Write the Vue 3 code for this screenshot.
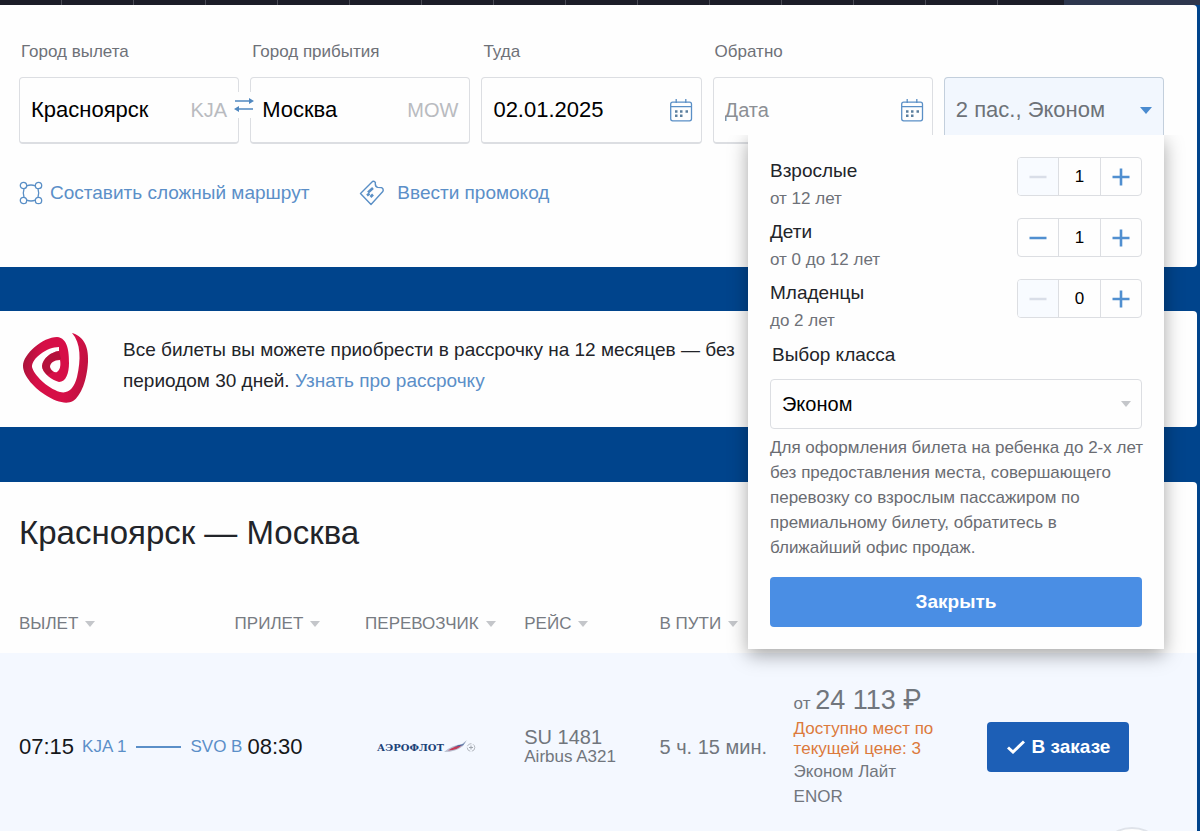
<template>
  <div class="page">
    <div class="topbar"></div>

    <section class="panel search">
      <div class="fields">
        <div class="field">
          <label for="from">Город вылета</label>
          <div class="box">
            <input id="from" v-model="from" type="text" />
            <span class="code">KJA</span>
          </div>
          <button class="swap" type="button" aria-label="Поменять города" @click="swapCities">
            <svg width="20" height="14" viewBox="0 0 20 14">
              <path d="M1 3h15M19 11H4" stroke="#5088c0" stroke-width="1.4" fill="none" />
              <path d="M15 0l5 3-5 3zM5 8l-5 3 5 3z" fill="#5088c0" />
            </svg>
          </button>
        </div>
        <div class="field">
          <label for="to">Город прибытия</label>
          <div class="box">
            <input id="to" v-model="to" type="text" />
            <span class="code">MOW</span>
          </div>
        </div>
        <div v-for="d in dates" :key="d.id" class="field">
          <label :for="d.id">{{ d.label }}</label>
          <div class="box">
            <input :id="d.id" v-model="d.value" type="text" placeholder="Дата" />
            <svg class="calendar" width="24" height="24" viewBox="0 0 24 24">
              <rect x="1.7" y="4.2" width="20.8" height="18.6" rx="2" fill="none" stroke="#5a8fc6" stroke-width="1.3" />
              <path d="M2 8.6h20.500M7.200 1v4M16.800 1v4" stroke="#5a8fc6" stroke-width="1.3" />
              <path d="M6 13.500h2.500M11 13.500h2.500M16.500 13.500h2.500M6 17.800h2.500M11 17.800h2.500" stroke="#5b7f9e" stroke-width="2.500" />
            </svg>
          </div>
        </div>
        <div class="field">
          <button class="pax" type="button" @click="open = !open">
            <span>2 пас., Эконом</span>
            <i class="caret caret-blue"></i>
          </button>
          <div v-if="open" class="popup">
            <div v-for="p in passengers" :key="p.title" class="row">
              <div>
                <div class="row-title">{{ p.title }}</div>
                <div class="row-note">{{ p.note }}</div>
              </div>
              <div class="counter">
                <button type="button" :disabled="p.count <= p.min" aria-label="Меньше" @click="p.count--">
                  <svg width="18" height="18" viewBox="0 0 18 18"><path d="M0.500 9h17" stroke="currentColor" stroke-width="2.600" /></svg>
                </button>
                <span>{{ p.count }}</span>
                <button type="button" aria-label="Больше" @click="p.count++">
                  <svg width="18" height="18" viewBox="0 0 18 18"><path d="M0.500 9h17M9 0.500v17" stroke="currentColor" stroke-width="2.600" /></svg>
                </button>
              </div>
            </div>
            <label class="class-label" for="cabin">Выбор класса</label>
            <div class="select-wrap">
              <select id="cabin" v-model="cabin">
                <option>Эконом</option>
                <option>Комфорт</option>
                <option>Бизнес</option>
              </select>
              <i class="caret"></i>
            </div>
            <p class="hint">
              Для оформления билета на ребенка до 2-х лет<br />
              без предоставления места, совершающего<br />
              перевозку со взрослым пассажиром по<br />
              премиальному билету, обратитесь в<br />
              ближайший офис продаж.
            </p>
            <button class="close" type="button" @click="open = false">Закрыть</button>
          </div>
        </div>
      </div>

      <div class="links">
        <a href="#">
          <svg width="24" height="24" viewBox="0 0 24 24" fill="none" stroke="#5a8fc6" stroke-width="1.3">
            <circle cx="4.500" cy="4.500" r="3.200" />
            <circle cx="19.500" cy="4.500" r="3.200" />
            <circle cx="4.500" cy="19.500" r="3.200" />
            <circle cx="19.500" cy="19.500" r="3.200" />
            <path d="M7.700 4.800Q12 3.200 16.300 4.800M7.700 19.200Q12 20.800 16.300 19.200M5 7.700Q3.600 12 5 16.300M19 7.700Q20.400 12 19 16.300" />
          </svg>
          Составить сложный маршрут
        </a>
        <a href="#">
          <svg width="31" height="26" viewBox="0 0 31 26" fill="none" stroke="#5a8fc6" stroke-width="1.4" stroke-linejoin="round">
            <path d="M1.500 13.500L13.500 1.500Q15.500 0.800 16.400 2.600Q15.800 6.400 18.600 7.400Q21 7.400 22.600 7.600Q25 9 23.800 11.500L12 24.500Z" />
            <path d="M9 12.500l5-4.500M8 15.500l2.500-2M11.500 17l2.500-2.500" stroke-width="2.600" />
          </svg>
          Ввести промокод
        </a>
      </div>
    </section>

    <section class="panel banner">
      <svg class="logo" width="68" height="74" viewBox="0 0 68 74">
        <defs>
          <linearGradient id="red" x1="0" y1="0.400" x2="1" y2="0.600">
            <stop offset="0" stop-color="#a8143a" />
            <stop offset="0.250" stop-color="#d60f47" />
            <stop offset="0.700" stop-color="#d60f47" />
            <stop offset="1" stop-color="#bd1340" />
          </linearGradient>
        </defs>
        <path d="M49 1C59 4 66 12 65 30C64 48 58 64 50 69C43 73 32 69 24 64C12 57 0 44 0 34C0 22 20 5 34 5C45 6 46 20 46 31C46 41 43 50 36 50C29 48 19 41 19 34C20 26 28 20 36 19L36 15C24 15 9 26 9 35C11 43 24 56 37 60C46 62 51 56 54 45C58 28 58 11 49 1Z" fill="url(#red)" />
        <path d="M19 34C20 26 28 20 36 19L38 27C31 28 27 31 27 35Q27 38 30 40L24 43Q19 38 19 34Z" fill="#9c1233" opacity="0.600" />
        <path d="M37 28C31 28 27 31 27 35C28 39 32 41 34 40C37 38 38 33 37 28Z" fill="#fefefe" />
      </svg>
      <p>
        Все билеты вы можете приобрести в рассрочку на 12 месяцев — без<br />
        периодом 30 дней. <a href="#">Узнать про рассрочку</a>
      </p>
    </section>

    <section class="panel results">
      <h1>Красноярск — Москва</h1>
      <table>
        <thead>
          <tr>
            <th v-for="(c, i) in columns" :key="i" :style="{ width: c.width }">
              {{ c.title }}<i v-if="c.title" class="caret"></i>
            </th>
          </tr>
        </thead>
        <tbody>
          <tr>
            <td colspan="2">
              <div class="route">
                <span class="time">07:15</span>
                <span class="airport">KJA 1</span>
                <span class="line"></span>
                <span class="airport">SVO B</span>
                <span class="time">08:30</span>
              </div>
            </td>
            <td>
              <div class="carrier">
                <span>АЭРОФЛОТ</span>
                <svg width="32" height="14" viewBox="0 0 32 14">
                  <path d="M0 12Q8 5 18 4L23 0L19 6Q12 12 0 12Z" fill="#b9bfd0" />
                  <path d="M4 10.500Q10 6 18 5Q14 10 4 10.500Z" fill="#c43a58" />
                  <path d="M10 7Q14 4.600 19 4.200L22 1.200L19 5.200Z" fill="#3c63a0" />
                  <circle cx="27" cy="7.500" r="3.800" fill="none" stroke="#b4b9c0" stroke-dasharray="5 1.500" />
                  <path d="M25 7.500h4M27 5.500v4" stroke="#a0a6ae" />
                </svg>
              </div>
            </td>
            <td>
              <div class="flight">SU 1481</div>
              <div class="plane">Airbus A321</div>
            </td>
            <td class="duration">5 ч. 15 мин.</td>
            <td>
              <div class="price">от <b>24 113 <span class="ruble">₽</span></b></div>
              <div class="seats">Доступно мест по текущей цене: 3</div>
              <div class="fare">Эконом Лайт</div>
              <div class="fare">ENOR</div>
            </td>
            <td>
              <button class="order" type="button">
                <svg width="18" height="14" viewBox="0 0 18 14"><path d="M1 7.500L6 12L17 1.500" fill="none" stroke="#fff" stroke-width="3" /></svg>
                В заказе
              </button>
            </td>
          </tr>
        </tbody>
      </table>
    </section>

    <button class="up" type="button" aria-label="Наверх"></button>
  </div>
</template>

<script setup>
import { ref } from 'vue';

const from = ref('Красноярск');
const to = ref('Москва');
const open = ref(true);
const cabin = ref('Эконом');

const dates = ref([
  { id: 'there', label: 'Туда', value: '02.01.2025' },
  { id: 'back', label: 'Обратно', value: '' }
]);

const passengers = ref([
  { title: 'Взрослые', note: 'от 12 лет', count: 1, min: 1 },
  { title: 'Дети', note: 'от 0 до 12 лет', count: 1, min: 0 },
  { title: 'Младенцы', note: 'до 2 лет', count: 0, min: 0 }
]);

const columns = [
  { title: 'ВЫЛЕТ', width: '19.6%' },
  { title: 'ПРИЛЕТ', width: '10.9%' },
  { title: 'ПЕРЕВОЗЧИК', width: '13.3%' },
  { title: 'РЕЙС', width: '11.3%' },
  { title: 'В ПУТИ', width: '11.2%' },
  { title: '', width: '16.2%' },
  { title: '', width: '17.5%' }
];

function swapCities() {
  [from.value, to.value] = [to.value, from.value];
}
</script>

<style>
body {
  background-color: #00448c;
}
</style>

<style scoped>
* {
  box-sizing: border-box;
}
.page {
  font-family: "Liberation Sans", Arial, sans-serif;
  font-size: 17px;
  color: #222429;
  height: 100vh;
  overflow: hidden;
}
button, input, select {
  font-family: inherit;
  color: inherit;
}
a {
  color: #5b8fc8;
  text-decoration: none;
}
.topbar {
  height: 5px;
  background: linear-gradient(90deg, transparent 1064px, #2e374e 1064px),
    repeating-linear-gradient(90deg, #1c1d28 0 61px, #4a4b55 61px 62px, #1c1d28 62px 72px);
}
.panel {
  background-color: #fefefe;
  margin-right: 3px;
  border-radius: 0 4px 4px 0;
}
.caret {
  display: inline-block;
  border: 5px solid transparent;
  border-top: 6px solid #c4c6ca;
  border-bottom: 0;
}
.caret-blue {
  border-width: 7px 6px 0;
  border-top-color: #4a8bd0;
}

/* search form */
.search {
  height: 262px;
  padding: 37px 33px 0 19px;
}
.fields {
  display: grid;
  grid-template-columns: repeat(5, 1fr);
  gap: 11px;
  align-items: end;
}
.field {
  position: relative;
}
.field > label {
  display: block;
  line-height: 20px;
  padding-left: 2px;
  margin-bottom: 15px;
  color: #6e7178;
}
.box, .pax {
  display: flex;
  align-items: center;
  width: 100%;
  height: 67px;
  padding: 0 11px;
  background-color: #fefefe;
  border: 1px solid #dcdee2;
  border-bottom-width: 2px;
  border-radius: 4px;
}
.box input {
  flex: 1;
  min-width: 0;
  width: 0;
  padding: 0;
  border: 0;
  outline: 0;
  background: none;
  font-size: 22px;
  color: #000;
}
.box input::placeholder {
  color: #8c8f94;
  font-size: 20px;
}
.code {
  font-size: 20px;
  color: #b9bbc0;
}
.calendar {
  margin-right: -3px;
}
.swap {
  position: absolute;
  right: -15px;
  bottom: 26px;
  z-index: 1;
  width: 20px;
  height: 26px;
  padding: 0;
  border: 0;
  background-color: #fefefe;
}
.swap svg {
  display: block;
}
.pax {
  justify-content: space-between;
  background-color: #f2f7fe;
  border-color: #c3cfdc;
  font-size: 22px;
  color: #6d7278;
}
.links {
  display: flex;
  gap: 50px;
  margin-top: 36px;
  font-size: 19px;
}
.links a {
  display: flex;
  align-items: center;
  gap: 7px;
  line-height: 26px;
}

/* passengers popup */
.popup {
  position: absolute;
  top: 58px;
  right: 0;
  z-index: 2;
  width: 416px;
  padding: 22px;
  background-color: #fefefe;
  box-shadow: 0 6px 18px rgba(0, 0, 0, 0.35);
  clip-path: inset(0 -30px -30px -30px);
}
.row {
  display: flex;
  justify-content: space-between;
  margin-bottom: 5px;
  line-height: 28px;
}
.row-title, .class-label {
  font-size: 19px;
}
.row-note {
  color: #6e7178;
}
.counter {
  display: grid;
  grid-template-columns: 1fr 43px 1fr;
  width: 125px;
  height: 39px;
  border: 1px solid #dcdee2;
  border-radius: 4px;
  overflow: hidden;
}
.counter span {
  border: solid #dcdee2;
  border-width: 0 1px;
  text-align: center;
  line-height: 37px;
  color: #000;
}
.counter button {
  display: flex;
  align-items: center;
  justify-content: center;
  padding: 0;
  border: 0;
  background: none;
  color: #508fd0;
}
.counter button:disabled {
  background-color: #f8fbff;
  color: #d9dee8;
}
.class-label {
  display: block;
  margin: 6px 0 10px 2px;
  line-height: 28px;
}
.select-wrap {
  position: relative;
}
.select-wrap select {
  appearance: none;
  display: block;
  width: 100%;
  height: 50px;
  padding: 0 11px;
  border: 1px solid #dcdee2;
  border-radius: 4px;
  background-color: #fefefe;
  font-size: 20px;
  color: #000;
}
.select-wrap .caret {
  position: absolute;
  right: 11px;
  top: 22px;
}
.hint {
  margin: 6px 0 17px;
  line-height: 25px;
  white-space: nowrap;
  color: #6a6c72;
}
.close {
  display: block;
  width: 100%;
  height: 50px;
  border: 0;
  border-radius: 4px;
  background-color: #4a8ee4;
  color: #fff;
  font-size: 19px;
  font-weight: bold;
}

/* instalment banner */
.banner {
  display: flex;
  align-items: center;
  gap: 32px;
  height: 116px;
  margin-top: 44px;
  padding-left: 23px;
}
.banner p {
  margin: 0;
  padding-bottom: 8px;
  font-size: 19px;
  line-height: 31px;
  white-space: nowrap;
}

/* flights */
.results {
  margin-top: 55px;
  padding-top: 29px;
}
h1 {
  margin: 0;
  padding-left: 19px;
  font-size: 33px;
  font-weight: normal;
  line-height: 44px;
}
table {
  width: 100%;
  table-layout: fixed;
  border-collapse: collapse;
}
th, td {
  padding: 0;
  text-align: left;
  font-weight: normal;
  white-space: nowrap;
}
th {
  height: 98px;
  padding-top: 40px;
  color: #777b82;
}
th:first-child, td:first-child {
  padding-left: 19px;
}
th .caret {
  margin-left: 7px;
  vertical-align: 2px;
}
td {
  height: 190px;
  padding-bottom: 2px;
  background-color: #f4f8ff;
  color: #71767d;
}
.route {
  display: flex;
  align-items: center;
}
.time {
  font-size: 22px;
  color: #15171a;
}
.airport {
  margin: 0 5px 0 8px;
  color: #5b8fc8;
}
.line {
  width: 45px;
  margin: 0 1px 0 5px;
  border-top: 2px solid #5b8fc8;
}
.carrier {
  display: flex;
  align-items: center;
  padding-left: 12px;
}
.carrier span {
  font: bold 10px "DejaVu Serif", serif;
  color: #1c4378;
}
.flight, .duration {
  font-size: 20px;
  line-height: 20px;
}
.plane, .seats {
  line-height: 20px;
}
.price {
  line-height: 30px;
}
.price b {
  font-size: 27px;
  font-weight: normal;
}
.ruble {
  font-family: "Roboto", "Noto Sans", sans-serif;
}
.seats {
  width: 150px;
  white-space: normal;
  color: #dc7a3c;
}
.fare {
  line-height: 25px;
}
.order {
  display: flex;
  align-items: center;
  justify-content: center;
  gap: 7px;
  width: 142px;
  height: 50px;
  padding: 0;
  border: 0;
  border-radius: 4px;
  background-color: #1d5fb6;
  color: #fff;
  font-size: 19px;
  font-weight: bold;
}
.up {
  position: fixed;
  right: 32px;
  bottom: -68px;
  width: 72px;
  height: 72px;
  border: 2px solid #dfe3ea;
  border-radius: 50%;
  background-color: #fefefe;
}
</style>
